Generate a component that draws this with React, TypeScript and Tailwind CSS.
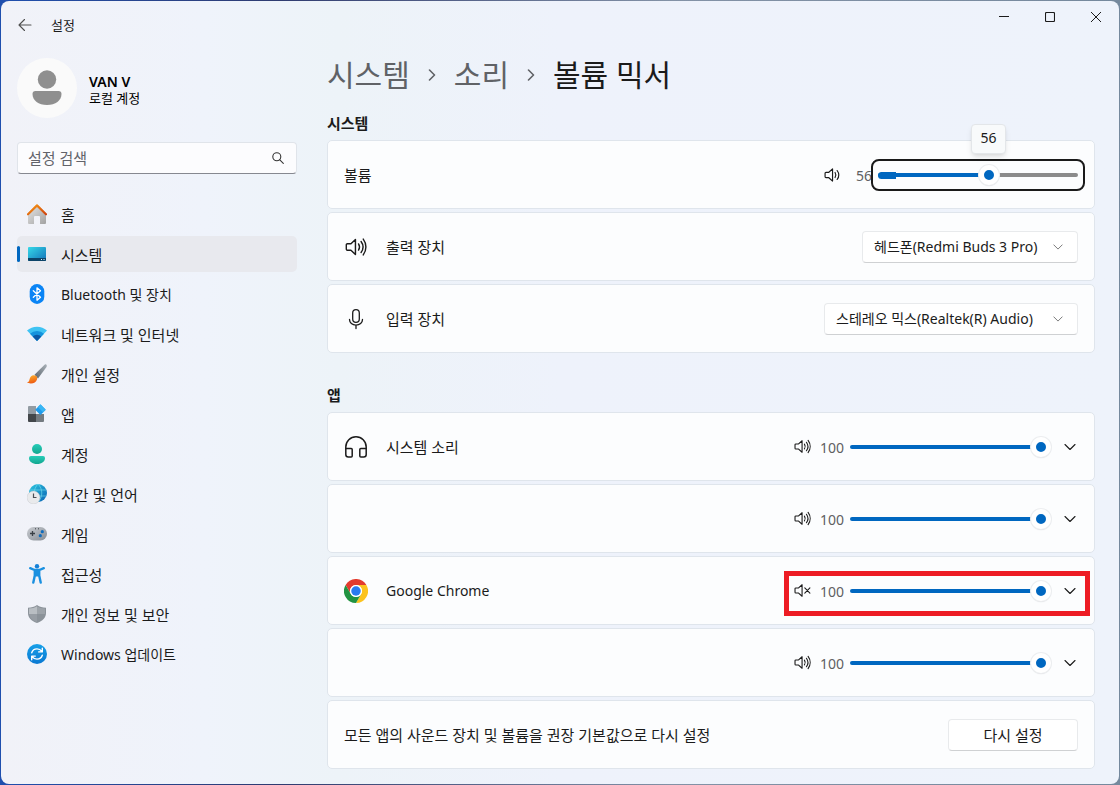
import { useState } from 'react';
import type { CSSProperties, ReactNode } from 'react';

const iconProps = {
  fill: 'none',
  stroke: 'currentColor',
  strokeLinecap: 'round',
  strokeLinejoin: 'round',
} as const;

function SpeakerIcon({ waves = 2, muted = false, className = '' }: { waves?: number; muted?: boolean; className?: string }) {
  return (
    <svg viewBox="0 0 20 20" className={className} {...iconProps} strokeWidth="1.3" aria-hidden="true">
      <path d="M9.5 3.2v13.6L5.4 13H2.2a1 1 0 0 1-1-1V8a1 1 0 0 1 1-1h3.2z" />
      {muted && <path d="M12.7 7l6 6M18.7 7l-6 6" />}
      {!muted && <path d="M12.3 7.2c1.1 1.7 1.1 3.9 0 5.6" />}
      {!muted && <path d="M14.6 5c2.2 3 2.2 7 0 10" />}
      {!muted && waves > 2 && <path d="M16.6 2.8c3.2 4.3 3.2 10.1 0 14.4" />}
    </svg>
  );
}

function MicIcon() {
  return (
    <svg viewBox="0 0 24 24" className="h-6 w-6" {...iconProps} strokeWidth="1.3" aria-hidden="true">
      <rect x="8.7" y="2.7" width="6.6" height="12.6" rx="3.3" />
      <path d="M5.5 12.5c0 3.3 2.8 5.7 6.5 5.7s6.5-2.4 6.5-5.7M12 18.2v3.3" />
    </svg>
  );
}

function HeadphoneIcon() {
  return (
    <svg viewBox="0 0 24 24" className="h-6 w-6" {...iconProps} strokeWidth="1.5" aria-hidden="true">
      <path d="M1.8 13.5V12a10.2 10.2 0 0 1 20.4 0v1.5" />
      <path d="M1.8 13.5h5.4a1 1 0 0 1 1 1V21a1 1 0 0 1-1 1H4.3a2.5 2.5 0 0 1-2.5-2.5zM22.2 13.5h-5.4a1 1 0 0 0-1 1V21a1 1 0 0 0 1 1h2.9a2.5 2.5 0 0 0 2.5-2.5z" />
    </svg>
  );
}

function ChromeIcon() {
  return (
    <svg viewBox="0 0 48 48" className="h-6 w-6" aria-hidden="true">
      <circle cx="24" cy="24" r="24" fill="#fff" />
      <path d="M3.2 12A24 24 0 0 1 44.8 12H24a12 12 0 0 0-10.4 18z" fill="#e33b2e" />
      <path d="M44.8 12A24 24 0 0 1 24 48l10.4-18A12 12 0 0 0 24 12z" fill="#fcc31e" />
      <path d="M24 48A24 24 0 0 1 3.2 12l10.4 18a12 12 0 0 0 20.8 0z" fill="#229342" />
      <circle cx="24" cy="24" r="12" fill="#fff" />
      <circle cx="24" cy="24" r="9.5" fill="#2a7bf0" />
    </svg>
  );
}

function Chevron({ className = '' }: { className?: string }) {
  return (
    <svg viewBox="0 0 12 12" className={className} {...iconProps} strokeWidth="1.1" aria-hidden="true">
      <path d="M1 3.5l5 5 5-5" />
    </svg>
  );
}

function HomeIcon() {
  return (
    <svg viewBox="0 0 20 20" className="h-5 w-5" aria-hidden="true">
      <defs>
        <linearGradient id="homeWall" x1="0" y1="0" x2="1" y2="1">
          <stop offset="0" stopColor="#e4e4e4" />
          <stop offset="1" stopColor="#a2a2a2" />
        </linearGradient>
        <linearGradient id="homeRoof" x1="0" y1="0" x2="1" y2="1">
          <stop offset="0" stopColor="#f79a16" />
          <stop offset="1" stopColor="#cf4310" />
        </linearGradient>
      </defs>
      <path d="M1 9.500L10 2l9 7.500V19a1 1 0 0 1-1 1h-5v-7a1 1 0 0 0-1-1H8a1 1 0 0 0-1 1v7H2a1 1 0 0 1-1-1z" fill="url(#homeWall)" />
      <path d="M1 10.3L10 1.4l9 8.900" fill="none" stroke="url(#homeRoof)" strokeWidth="2.2" strokeLinecap="round" strokeLinejoin="round" />
    </svg>
  );
}

function SystemIcon() {
  return (
    <svg viewBox="0 0 20 20" className="h-5 w-5" aria-hidden="true">
      <defs>
        <linearGradient id="screen" x1="0" y1="0" x2="1" y2="1">
          <stop offset="0" stopColor="#36d9e8" />
          <stop offset="1" stopColor="#1271b8" />
        </linearGradient>
      </defs>
      <rect x="1" y="3" width="18" height="14" rx="1" fill="url(#screen)" />
      <path d="M1 14h18v2a1 1 0 0 1-1 1H2a1 1 0 0 1-1-1z" fill="#0c4468" />
      <path d="M14 15.500h1M16.500 15.500h1" stroke="#d8f2ff" strokeWidth="1" />
    </svg>
  );
}

function BluetoothIcon() {
  return (
    <svg viewBox="0 0 20 20" className="h-5 w-5" aria-hidden="true">
      <rect x="2.7" y="0" width="14.6" height="20" rx="7.3" fill="#0a84f5" />
      <path d="M6.300 6.700l7.200 6.500-3.500 3v-12.400l3.500 3-7.200 6.500" fill="none" stroke="#fff" strokeWidth="1.3" strokeLinejoin="round" strokeLinecap="round" />
    </svg>
  );
}

function WifiIcon() {
  return (
    <svg viewBox="0 0 20 20" className="h-5 w-5" aria-hidden="true">
      <path d="M0 6.6a14.6 14.6 0 0 1 20 0L10 17z" fill="#3fc3f3" />
      <path d="M3 9.7a10.3 10.3 0 0 1 14 0L10 17z" fill="#1593dd" />
      <path d="M5.7 12.5a6.4 6.4 0 0 1 8.6 0L10 17z" fill="#0c59a6" />
    </svg>
  );
}

function BrushIcon() {
  return (
    <svg viewBox="0 0 20 20" className="h-5 w-5" aria-hidden="true">
      <defs>
        <linearGradient id="handle" x1="1" y1="0" x2="0" y2="1">
          <stop offset="0" stopColor="#a9b1b8" />
          <stop offset="1" stopColor="#5b646d" />
        </linearGradient>
        <linearGradient id="bristle" x1="0" y1="0" x2="0.3" y2="1">
          <stop offset="0" stopColor="#ffb62e" />
          <stop offset="1" stopColor="#ee5d12" />
        </linearGradient>
      </defs>
      <path d="M7.5 10.8L17.3.9c1.5-1.4 3.2.2 2.2 2L11 14.500z" fill="url(#handle)" />
      <path d="M7 11.3c2.6.1 3.8 2 3 4.3-.9 2.7-3.3 4-6.3 3.9-1.7 0-2.8-.3-3.7-.9 1.7-.4 2-1.5 2.5-3.2.6-2.500 1.900-4.200 4.500-4.100z" fill="url(#bristle)" />
    </svg>
  );
}

function AppsIcon() {
  return (
    <svg viewBox="0 0 20 20" className="h-5 w-5" aria-hidden="true">
      <path d="M2 2h7v8H1V3a1 1 0 0 1 1-1z" fill="#929ba3" />
      <path d="M1 10h8v8H2a1 1 0 0 1-1-1z" fill="#43474b" />
      <path d="M9 10h8v7a1 1 0 0 1-1 1H9z" fill="#747b81" />
      <rect x="9.7" y="1.9" width="7.6" height="7.6" rx="0.8" transform="rotate(45 13.5 5.7)" fill="#1f9bec" />
      <path d="M13.5.3l5.2 5.4-2.6 2.6-5.3-5.300z" fill="#38b6f5" />
    </svg>
  );
}

function AccountIcon() {
  return (
    <svg viewBox="0 0 20 20" className="h-5 w-5" aria-hidden="true">
      <defs>
        <linearGradient id="person" x1="0" y1="0" x2="0" y2="1">
          <stop offset="0" stopColor="#27ccb8" />
          <stop offset="1" stopColor="#12a68f" />
        </linearGradient>
      </defs>
      <circle cx="10" cy="5" r="5" fill="url(#person)" />
      <path d="M4 12h12a2 2 0 0 1 2 2c0 3.6-3.3 6-8 6s-8-2.4-8-6a2 2 0 0 1 2-2z" fill="url(#person)" />
    </svg>
  );
}

function TimeIcon() {
  return (
    <svg viewBox="0 0 20 20" className="h-5 w-5" aria-hidden="true">
      <defs>
        <linearGradient id="globe" x1="0" y1="0" x2="1" y2="1">
          <stop offset="0" stopColor="#2cc7e0" />
          <stop offset="1" stopColor="#0c64b4" />
        </linearGradient>
      </defs>
      <circle cx="11" cy="9" r="9" fill="url(#globe)" />
      <path d="M3 6h16M3 12h16M11 0c-5 5-5 13 0 18M11 0c5 5 5 13 0 18" fill="none" stroke="#7be0f0" strokeWidth="0.6" />
      <circle cx="6.5" cy="13.5" r="6.5" fill="#e9eaec" stroke="#bfc3c8" strokeWidth="0.4" />
      <path d="M6.5 9.500v4h3" fill="none" stroke="#4a4e54" strokeWidth="1.2" />
    </svg>
  );
}

function GameIcon() {
  return (
    <svg viewBox="0 0 20 20" className="h-5 w-5" aria-hidden="true">
      <defs>
        <linearGradient id="pad" x1="0" y1="0" x2="1" y2="1">
          <stop offset="0" stopColor="#c9ccd1" />
          <stop offset="1" stopColor="#868c94" />
        </linearGradient>
      </defs>
      <rect x="0" y="3" width="20" height="13.5" rx="6.5" fill="url(#pad)" />
      <path d="M3 9.500h5M5.500 7v5" stroke="#3b4046" strokeWidth="1.3" />
      <path d="M8 4.800h1M11 4.800h1" stroke="#3b4046" strokeWidth="1" />
      <circle cx="15.3" cy="7.7" r="1.6" fill="#0f6cbd" />
      <circle cx="13.3" cy="11.7" r="1.6" fill="#0f6cbd" />
    </svg>
  );
}

function AccessibilityIcon() {
  return (
    <svg viewBox="0 0 20 20" className="h-5 w-5" aria-hidden="true">
      <circle cx="10" cy="2.2" r="2.2" fill="#1681d8" />
      <path d="M3.2 4.2L7.500 6h5l4.300-1.800M7.800 6v5.500L6.300 18.600M12.200 6v5.500l1.500 7.100" fill="none" stroke="#1a90e0" strokeWidth="2.4" strokeLinecap="round" strokeLinejoin="round" />
      <path d="M7.800 5.500h4.400v7H7.800z" fill="#1a90e0" />
    </svg>
  );
}

function ShieldIcon() {
  return (
    <svg viewBox="0 0 20 20" className="h-5 w-5" aria-hidden="true">
      <path d="M10 1c2.5 1.8 5.5 2.7 9 2.7V9c0 4.7-3.4 8.2-9 10-5.6-1.8-9-5.3-9-10V3.7C4.5 3.7 7.5 2.8 10 1z" fill="#8b9299" />
      <path d="M10 2.3v7.7H2V4.6c3-.1 5.7-.9 8-2.3z" fill="#b9bec3" />
      <path d="M10 2.3v7.7h8V4.6c-3-.1-5.7-.9-8-2.3z" fill="#9da3a9" />
      <path d="M10 10H2.1c.5 3.7 3.4 6.500 7.900 8z" fill="#979da4" />
    </svg>
  );
}

function UpdateIcon() {
  return (
    <svg viewBox="0 0 20 20" className="h-5 w-5" aria-hidden="true">
      <defs>
        <linearGradient id="update" x1="0" y1="0" x2="0" y2="1">
          <stop offset="0" stopColor="#17a0e8" />
          <stop offset="1" stopColor="#0a78d2" />
        </linearGradient>
      </defs>
      <circle cx="10" cy="10" r="10" fill="url(#update)" />
      <path d="M4.7 8.8C5.5 6.3 7.5 4.9 10 4.9c2 0 3.7.9 4.8 2.5M15.3 4.3v3.6h-3.6M15.3 11.2c-.8 2.5-2.8 3.9-5.3 3.9-2 0-3.7-.9-4.8-2.5M4.7 15.7v-3.600h3.600" fill="none" stroke="#fff" strokeWidth="1.4" strokeLinecap="round" strokeLinejoin="round" />
    </svg>
  );
}

const navItems: { label: string; icon: ReactNode; active?: boolean; latin?: boolean }[] = [
  { label: '홈', icon: <HomeIcon /> },
  { label: '시스템', icon: <SystemIcon />, active: true },
  { label: 'Bluetooth 및 장치', icon: <BluetoothIcon />, latin: true },
  { label: '네트워크 및 인터넷', icon: <WifiIcon /> },
  { label: '개인 설정', icon: <BrushIcon /> },
  { label: '앱', icon: <AppsIcon /> },
  { label: '계정', icon: <AccountIcon /> },
  { label: '시간 및 언어', icon: <TimeIcon /> },
  { label: '게임', icon: <GameIcon /> },
  { label: '접근성', icon: <AccessibilityIcon /> },
  { label: '개인 정보 및 보안', icon: <ShieldIcon /> },
  { label: 'Windows 업데이트', icon: <UpdateIcon />, latin: true },
];

const apps: { id: string; name: string; icon: ReactNode; muted?: boolean; latin?: boolean; marked?: boolean }[] = [
  { id: 'system', name: '시스템 소리', icon: <HeadphoneIcon /> },
  { id: 'app-1', name: '', icon: null },
  { id: 'chrome', name: 'Google Chrome', icon: <ChromeIcon />, muted: true, latin: true, marked: true },
  { id: 'app-2', name: '', icon: null },
];

function Card({ children }: { children: ReactNode }) {
  return (
    <div className="relative flex h-[69px] items-center rounded-[5px] border border-[#dfe5ec] bg-[#fcfdfe] px-4">
      {children}
    </div>
  );
}

function SectionTitle({ children }: { children: ReactNode }) {
  return <h2 className="mb-[7px] h-5 text-[15px] leading-5 font-bold">{children}</h2>;
}

function VolumeSlider({ label, value, onChange }: { label: string; value: number; onChange: (v: number) => void }) {
  return (
    <input
      type="range"
      aria-label={label}
      value={value}
      onChange={(e) => onChange(Number(e.target.value))}
      style={{ '--fill': `${value}%` } as CSSProperties}
      className="block h-5 w-full appearance-none bg-transparent outline-none [&::-webkit-slider-runnable-track]:h-1 [&::-webkit-slider-runnable-track]:rounded-full [&::-webkit-slider-runnable-track]:bg-[linear-gradient(to_right,#0067c0_var(--fill),#8b8b8b_var(--fill))] [&::-webkit-slider-thumb]:-mt-2 [&::-webkit-slider-thumb]:h-5 [&::-webkit-slider-thumb]:w-5 [&::-webkit-slider-thumb]:appearance-none [&::-webkit-slider-thumb]:rounded-full [&::-webkit-slider-thumb]:border-[5px] [&::-webkit-slider-thumb]:border-white [&::-webkit-slider-thumb]:bg-[#0067c0] [&::-webkit-slider-thumb]:shadow-[0_0_0_1px_#eceef0,0_1px_1px_#c4c6c8]"
    />
  );
}

function DeviceSelect({ id, option, className }: { id: string; option: string; className: string }) {
  return (
    <div className={`relative ml-auto ${className}`}>
      <select
        id={id}
        className="block h-8 w-full appearance-none rounded-[4px] border border-[#e8eaec] border-b-[#cfd1d3] bg-white pr-9 pl-[11px] text-[14px] outline-none"
      >
        <option>{option}</option>
      </select>
      <Chevron className="pointer-events-none absolute top-[11px] right-[15px] h-[10px] w-[10px] text-[#707070]" />
    </div>
  );
}

function AppRow({ app }: { app: (typeof apps)[number] }) {
  const [volume, setVolume] = useState(100);

  return (
    <Card>
      <span className="mr-[18px] flex h-6 w-6 items-center">{app.icon}</span>
      <span className={app.latin ? 'text-[14px]' : ''}>{app.name}</span>
      <div className="ml-auto flex items-center">
        <button type="button" aria-label="음소거">
          <SpeakerIcon waves={3} muted={app.muted} className="h-[17px] w-[17px]" />
        </button>
        <span className="ml-[9px] w-6 pt-0.5 text-[14px] text-[#5f6062]">{volume}</span>
        <div className="ml-[6px] w-[201px]">
          <VolumeSlider label={app.name || app.id} value={volume} onChange={setVolume} />
        </div>
        <button type="button" aria-label="펼치기" className="ml-[11px] flex w-4 justify-center">
          <Chevron className="h-3 w-3" />
        </button>
      </div>
      {app.marked && (
        <div className="pointer-events-none absolute top-[14px] right-1 bottom-2 w-[306px] border-[5px] border-[#ed1c24]" />
      )}
    </Card>
  );
}

export default function App() {
  const [master, setMaster] = useState(56);

  return (
    <div className="flex min-h-screen bg-[linear-gradient(to_right,#1f4fae,#2f3b70_25%,#8392a6_60%,#75899d)] p-px font-['Noto_Sans','Noto_Sans_CJK_KR',sans-serif] text-[15px] leading-5 text-[#1b1b1b]">
      <div className="flex flex-1 flex-col overflow-hidden rounded-[8px] bg-[linear-gradient(to_right,#f1f2f8,#eff3fb_18%,#edf3f8_30%,#eef2fb_50%,#eef3fb)]">
        {/* Title bar */}
        <header className="flex h-12 items-start">
          <button type="button" aria-label="뒤로" className="flex h-12 w-12 items-center justify-center">
            <svg viewBox="0 0 14 14" className="h-[14px] w-[14px] text-[#505050]" {...iconProps} strokeWidth="1.1" aria-hidden="true">
              <path d="M13 7H1M6.500 1.500L1 7l5.500 5.500" />
            </svg>
          </button>
          <span className="ml-[2px] text-[13px] leading-12">설정</span>
          <div className="ml-auto flex">
            <button type="button" aria-label="최소화" className="flex h-8 w-[46px] items-center justify-center">
              <svg viewBox="0 0 10 10" className="h-[10px] w-[10px]" {...iconProps} aria-hidden="true">
                <path d="M0 4.500h10" />
              </svg>
            </button>
            <button type="button" aria-label="최대화" className="flex h-8 w-[46px] items-center justify-center">
              <svg viewBox="0 0 10 10" className="h-[10px] w-[10px]" {...iconProps} strokeWidth="1.1" aria-hidden="true">
                <rect x="0.5" y="0.5" width="9" height="9" rx="1" />
              </svg>
            </button>
            <button type="button" aria-label="닫기" className="flex h-8 w-[46px] items-center justify-center">
              <svg viewBox="0 0 10 10" className="h-[10px] w-[10px]" {...iconProps} aria-hidden="true">
                <path d="M0 0l10 10M10 0L0 10" />
              </svg>
            </button>
          </div>
        </header>

        <div className="flex flex-1 gap-[30px] pr-6 pb-[15px] pl-4">
          {/* Sidebar */}
          <aside className="w-[280px] shrink-0 pt-[9px]">
            <div className="flex items-center">
              <svg viewBox="0 0 60 60" className="h-[60px] w-[60px]" aria-hidden="true">
                <circle cx="30" cy="30" r="30" fill="#fafafa" />
                <circle cx="30" cy="21.5" r="9.2" fill="#8f8f8f" />
                <path d="M18.5 33h23a3 3 0 0 1 3 3c0 6.5-6 11-14.500 11s-14.500-4.500-14.500-11a3 3 0 0 1 3-3z" fill="#8f8f8f" />
              </svg>
              <div className="ml-3 pt-1 text-[13px] leading-4 text-black">
                <p className="text-[14px] font-semibold">VAN V</p>
                <p>로컬 계정</p>
              </div>
            </div>

            <div className="relative mt-6">
              <input
                type="text"
                aria-label="설정 검색"
                placeholder="설정 검색"
                className="block h-8 w-full rounded-[4px] border border-[#e0e4ea] border-b-[#868890] bg-[#fcfcfe] pr-9 pl-[10px] text-[15px] outline-none placeholder:text-[#62636a]"
              />
              <svg viewBox="0 0 12 12" className="absolute top-[10px] right-[13px] h-3 w-3 text-[#333]" {...iconProps} strokeWidth="1.1" aria-hidden="true">
                <circle cx="4.8" cy="4.8" r="4" />
                <path d="M7.8 7.8l3.500 3.500" />
              </svg>
            </div>

            <nav className="mt-[22px] flex flex-col gap-1">
              {navItems.map((item) => (
                <a
                  key={item.label}
                  href="#"
                  className={`relative flex h-9 items-center rounded-[5px] pl-[10px] ${item.active ? 'bg-[#e8e9ee]' : ''}`}
                >
                  {item.active && <span className="absolute top-[10px] left-0 h-4 w-[3px] rounded-full bg-[#0067c0]" />}
                  {item.icon}
                  <span className={`ml-[14px] pt-0.5 ${item.latin ? 'text-[14px]' : ''}`}>{item.label}</span>
                </a>
              ))}
            </nav>
          </aside>

          {/* Content */}
          <main className="min-w-0 flex-1">
            <h1 className="flex h-[52px] items-center text-[30px] leading-10">
              <a href="#" className="text-[#606266]">시스템</a>
              <Chevron className="mx-4 h-3 w-3 -rotate-90 stroke-[1.6] text-[#606266]" />
              <a href="#" className="text-[#606266]">소리</a>
              <Chevron className="mx-4 h-3 w-3 -rotate-90 stroke-[1.6] text-[#606266]" />
              <span>볼륨 믹서</span>
            </h1>

            <section className="mt-3">
              <SectionTitle>시스템</SectionTitle>
              <div className="flex flex-col gap-[3px]">
                <Card>
                  <span>볼륨</span>
                  <div className="-mr-[7px] ml-auto flex items-center">
                    <button type="button" aria-label="음소거">
                      <SpeakerIcon className="h-[18px] w-[18px]" />
                    </button>
                    <span className="ml-[14px] w-[15px] pt-0.5 text-[14px] text-[#5f6062]">{master}</span>
                    <div className="relative h-8 w-[214px] rounded-[8px] border-2 border-[#1a1a1a] px-[5px] py-1">
                      <VolumeSlider label="볼륨" value={master} onChange={setMaster} />
                      <span className="pointer-events-none absolute top-[11px] left-[5px] h-[7px] w-[18px] rounded-l-full bg-[#0067c0]" />
                      <output className="absolute right-[77px] bottom-[35px] flex h-[30px] w-[35px] items-center justify-center rounded-[4px] border border-[#e3e6e9] bg-[#f8fafb] pb-0.5 text-[14px] shadow-md">
                        {master}
                      </output>
                    </div>
                  </div>
                </Card>
                <Card>
                  <SpeakerIcon waves={3} className="mr-[18px] h-6 w-6 p-px" />
                  <label htmlFor="output">출력 장치</label>
                  <DeviceSelect id="output" option="헤드폰(Redmi Buds 3 Pro)" className="w-[216px]" />
                </Card>
                <Card>
                  <span className="mr-[18px]">
                    <MicIcon />
                  </span>
                  <label htmlFor="input">입력 장치</label>
                  <DeviceSelect id="input" option="스테레오 믹스(Realtek(R) Audio)" className="w-[254px]" />
                </Card>
              </div>
            </section>

            <section className="mt-8">
              <SectionTitle>앱</SectionTitle>
              <div className="flex flex-col gap-[3px]">
                {apps.map((app) => (
                  <AppRow key={app.id} app={app} />
                ))}
                <Card>
                  <span>모든 앱의 사운드 장치 및 볼륨을 권장 기본값으로 다시 설정</span>
                  <button
                    type="button"
                    className="ml-auto h-8 w-[130px] rounded-[4px] border border-[#e8eaec] border-b-[#cfd1d3] bg-white"
                  >
                    다시 설정
                  </button>
                </Card>
              </div>
            </section>
          </main>
        </div>
      </div>
    </div>
  );
}
